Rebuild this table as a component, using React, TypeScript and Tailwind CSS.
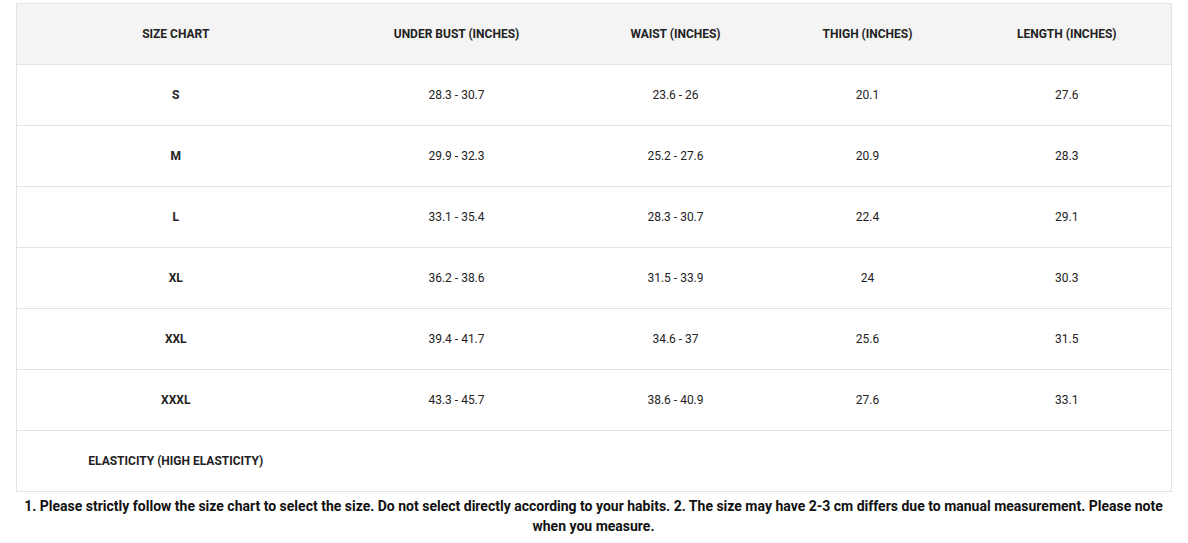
import React from 'react';

const rows = [
  ['S', '28.3 - 30.7', '23.6 - 26', '20.1', '27.6'],
  ['M', '29.9 - 32.3', '25.2 - 27.6', '20.9', '28.3'],
  ['L', '33.1 - 35.4', '28.3 - 30.7', '22.4', '29.1'],
  ['XL', '36.2 - 38.6', '31.5 - 33.9', '24', '30.3'],
  ['XXL', '39.4 - 41.7', '34.6 - 37', '25.6', '31.5'],
  ['XXXL', '43.3 - 45.7', '38.6 - 40.9', '27.6', '33.1'],
];

const headers = ['SIZE CHART', 'UNDER BUST (INCHES)', 'WAIST (INCHES)', 'THIGH (INCHES)', 'LENGTH (INCHES)'];

export default function App() {
  return (
    <div className="bg-white min-h-screen pt-[3px] px-4 font-['Roboto',sans-serif] text-[#222]">
      <table className="w-[1155px] border-collapse table-fixed border border-[#e3e3e3] text-[12px]">
        <colgroup>
          <col className="w-[318px]" />
          <col className="w-[244px]" />
          <col className="w-[194px]" />
          <col className="w-[190px]" />
          <col className="w-[209px]" />
        </colgroup>
        <thead>
          <tr className="bg-[#f4f4f4] h-[61px] border-b border-[#e3e3e3]">
            {headers.map((h) => (
              <th key={h} className="font-bold text-center align-middle">{h}</th>
            ))}
          </tr>
        </thead>
        <tbody>
          {rows.map((r) => (
            <tr key={r[0]} className="h-[61px] border-b border-[#e3e3e3]">
              {r.map((c, i) => (
                <td key={i} className={`text-center align-middle ${i === 0 ? 'font-bold' : ''}`}>{c}</td>
              ))}
            </tr>
          ))}
          <tr className="h-[61px]">
            <td className="text-center align-middle font-bold">ELASTICITY (HIGH ELASTICITY)</td>
            <td />
            <td />
            <td />
            <td />
          </tr>
        </tbody>
      </table>
      <p className="w-[1155px] text-center text-[14px] leading-[20px] font-bold text-[#111] mt-[4px]">
        1. Please strictly follow the size chart to select the size. Do not select directly according to your habits. 2. The size may have 2-3 cm differs due to manual measurement. Please note when you measure.
      </p>
    </div>
  );
}
